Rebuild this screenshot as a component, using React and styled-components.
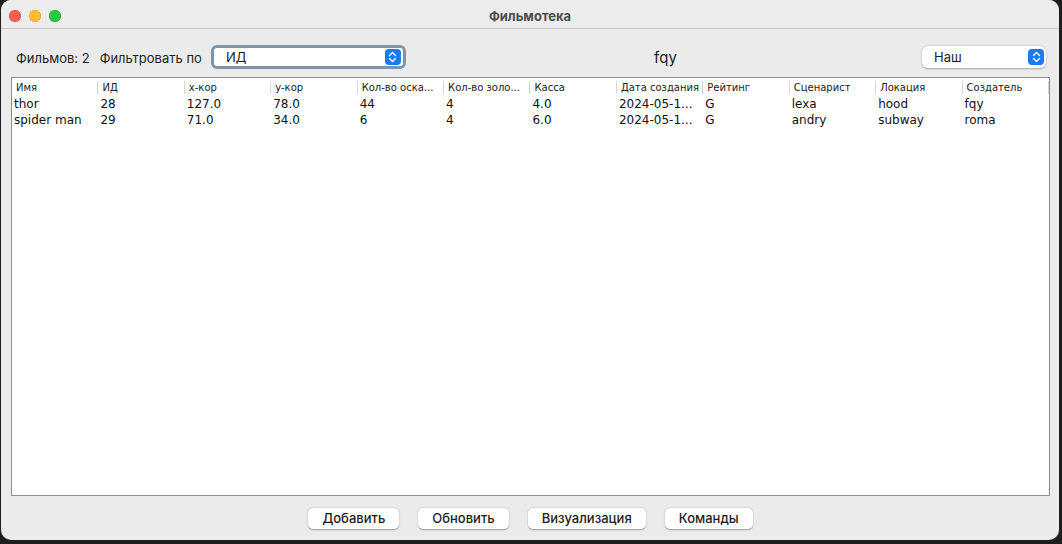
import React from "react";
import styled, { createGlobalStyle } from "styled-components";

const GlobalStyle = createGlobalStyle`
    html, body {
        margin: 0;
        padding: 0;
        background: #1e1e1e;
    }
    body {
        font-family: "Inter", "Liberation Sans", sans-serif;
        width: 1062px;
        height: 544px;
        overflow: hidden;
    }
`;

const columns = [
    "Имя",
    "ИД",
    "x-кор",
    "y-кор",
    "Кол-во оска...",
    "Кол-во золо...",
    "Касса",
    "Дата создания",
    "Рейтинг",
    "Сценарист",
    "Локация",
    "Создатель",
];

const rows = [
    ["thor", "28", "127.0", "78.0", "44", "4", "4.0", "2024-05-1...", "G", "lexa", "hood", "fqy"],
    ["spider man", "29", "71.0", "34.0", "6", "4", "6.0", "2024-05-1...", "G", "andry", "subway", "roma"],
];

const buttons = ["Добавить", "Обновить", "Визуализация", "Команды"];

const App = () => {
    return (
        <>
            <GlobalStyle />
            <Window>
                <TitleBar>
                    <Lights>
                        <Light color="#fe5f57" border="#e0443e" />
                        <Light color="#febc2e" border="#dea123" />
                        <Light color="#28c840" border="#1aab29" />
                    </Lights>
                    <Title>Фильмотека</Title>
                </TitleBar>
                <Toolbar>
                    <Label>Фильмов: 2</Label>
                    <Label>Фильтровать по</Label>
                    <Select width="195px" focused>
                        <SelectText>ИД</SelectText>
                        <SelectArrow>
                            <Chevrons />
                        </SelectArrow>
                    </Select>
                    <UserName>fqy</UserName>
                    <Select width="124px">
                        <SelectText>Наш</SelectText>
                        <SelectArrow>
                            <Chevrons />
                        </SelectArrow>
                    </Select>
                </Toolbar>
                <TableBox>
                    <HeaderRow>
                        {columns.map((c) => (
                            <HeaderCell key={c}>{c}</HeaderCell>
                        ))}
                    </HeaderRow>
                    {rows.map((r) => (
                        <Row key={r[0]}>
                            {r.map((v, i) => (
                                <Cell key={i}>{v}</Cell>
                            ))}
                        </Row>
                    ))}
                </TableBox>
                <ButtonBar>
                    {buttons.map((b) => (
                        <Button key={b}>{b}</Button>
                    ))}
                </ButtonBar>
            </Window>
        </>
    );
};

const Chevrons = () => (
    <svg width="9" height="12" viewBox="0 0 9 12">
        <path d="M1.5 4.5 L4.5 1.5 L7.5 4.5" fill="none" stroke="#fff" strokeWidth="1.4" strokeLinecap="round" strokeLinejoin="round" />
        <path d="M1.5 7.5 L4.5 10.5 L7.5 7.5" fill="none" stroke="#fff" strokeWidth="1.4" strokeLinecap="round" strokeLinejoin="round" />
    </svg>
);

export default App;

const Window = styled.div`
    width: 1058px;
    height: 540px;
    margin-left: 1px;
    background: #ebebeb;
    border-radius: 10px;
    display: flex;
    flex-direction: column;
    overflow: hidden;
`;

const TitleBar = styled.div`
    height: 28px;
    border-bottom: 1px solid #c9c9c9;
    display: flex;
    align-items: center;
    position: relative;
    background: #ececec;
`;

const Lights = styled.div`
    display: flex;
    gap: 8px;
    padding-left: 8px;
    padding-top: 4px;
`;

const Light = styled.div`
    width: 12px;
    height: 12px;
    border-radius: 50%;
    background: ${(p) => p.color};
    box-shadow: inset 0 0 0 0.5px ${(p) => p.border};
`;

const Title = styled.div`
    position: absolute;
    left: 0;
    right: 0;
    top: 8px;
    text-align: center;
    font-size: 13px;
    font-weight: 700;
    color: #4d4d4d;
`;

const Toolbar = styled.div`
    height: 48px;
    display: flex;
    align-items: center;
    padding: 8px 13px 0 15px;
    box-sizing: border-box;
`;

const Label = styled.span`
    font-size: 13px;
    color: #1d1d1d;
    margin-right: 10px;
    margin-top: 1px;
`;

const Select = styled.div`
    width: ${(p) => p.width};
    height: ${(p) => (p.focused ? "24px" : "22px")};
    box-sizing: border-box;
    background: #fff;
    border-radius: 6px;
    display: flex;
    align-items: center;
    justify-content: space-between;
    padding: 0 2px 0 12px;
    border: ${(p) => (p.focused ? "3px solid #7f93ad" : "none")};
    box-shadow: ${(p) => (p.focused ? "none" : "0 0.5px 2px rgba(0,0,0,0.3)")};
    margin-left: ${(p) => (p.focused ? "-1px" : "0")};
`;

const SelectText = styled.span`
    font-size: 13px;
    color: #1d1d1d;
`;

const SelectArrow = styled.div`
    width: 16px;
    height: 16px;
    border-radius: 4px;
    background: #1a7cf5;
    display: flex;
    align-items: center;
    justify-content: center;
`;

const UserName = styled.div`
    flex: 1;
    text-align: center;
    font-size: 15px;
    color: #1d1d1d;
    padding-left: 153px;
    padding-right: 150px;
`;

const TableBox = styled.div`
    flex: 1;
    margin: 0 9px 0 10px;
    border: 1px solid #8e8e8e;
    background: #fff;
`;

const HeaderRow = styled.div`
    display: grid;
    grid-template-columns: repeat(12, 1fr);
    height: 18px;
    align-items: center;
`;

const HeaderCell = styled.div`
    font-family: "DejaVu Sans", "Liberation Sans", sans-serif;
    font-size: 10px;
    color: #222;
    padding-left: 4px;
    border-right: 1px solid #d6d6d6;
    height: 13px;
    line-height: 13px;
    white-space: nowrap;
    overflow: hidden;
`;

const Row = styled.div`
    display: grid;
    grid-template-columns: repeat(12, 1fr);
    height: 16px;
    align-items: center;
`;

const Cell = styled.div`
    font-family: "DejaVu Sans", "Liberation Sans", sans-serif;
    font-size: 12px;
    color: #111;
    padding-left: 2px;
    white-space: nowrap;
    overflow: hidden;
`;

const ButtonBar = styled.div`
    height: 44px;
    display: flex;
    justify-content: center;
    align-items: center;
    gap: 19px;
    padding-left: 1px;
`;

const Button = styled.div`
    height: 21px;
    padding: 0 14px;
    min-width: 63px;
    box-sizing: border-box;
    background: #fff;
    border-radius: 5px;
    box-shadow: 0 0.5px 1.5px rgba(0, 0, 0, 0.35);
    font-size: 13px;
    font-weight: 500;
    color: #1d1d1d;
    display: flex;
    align-items: center;
    justify-content: center;
`;
